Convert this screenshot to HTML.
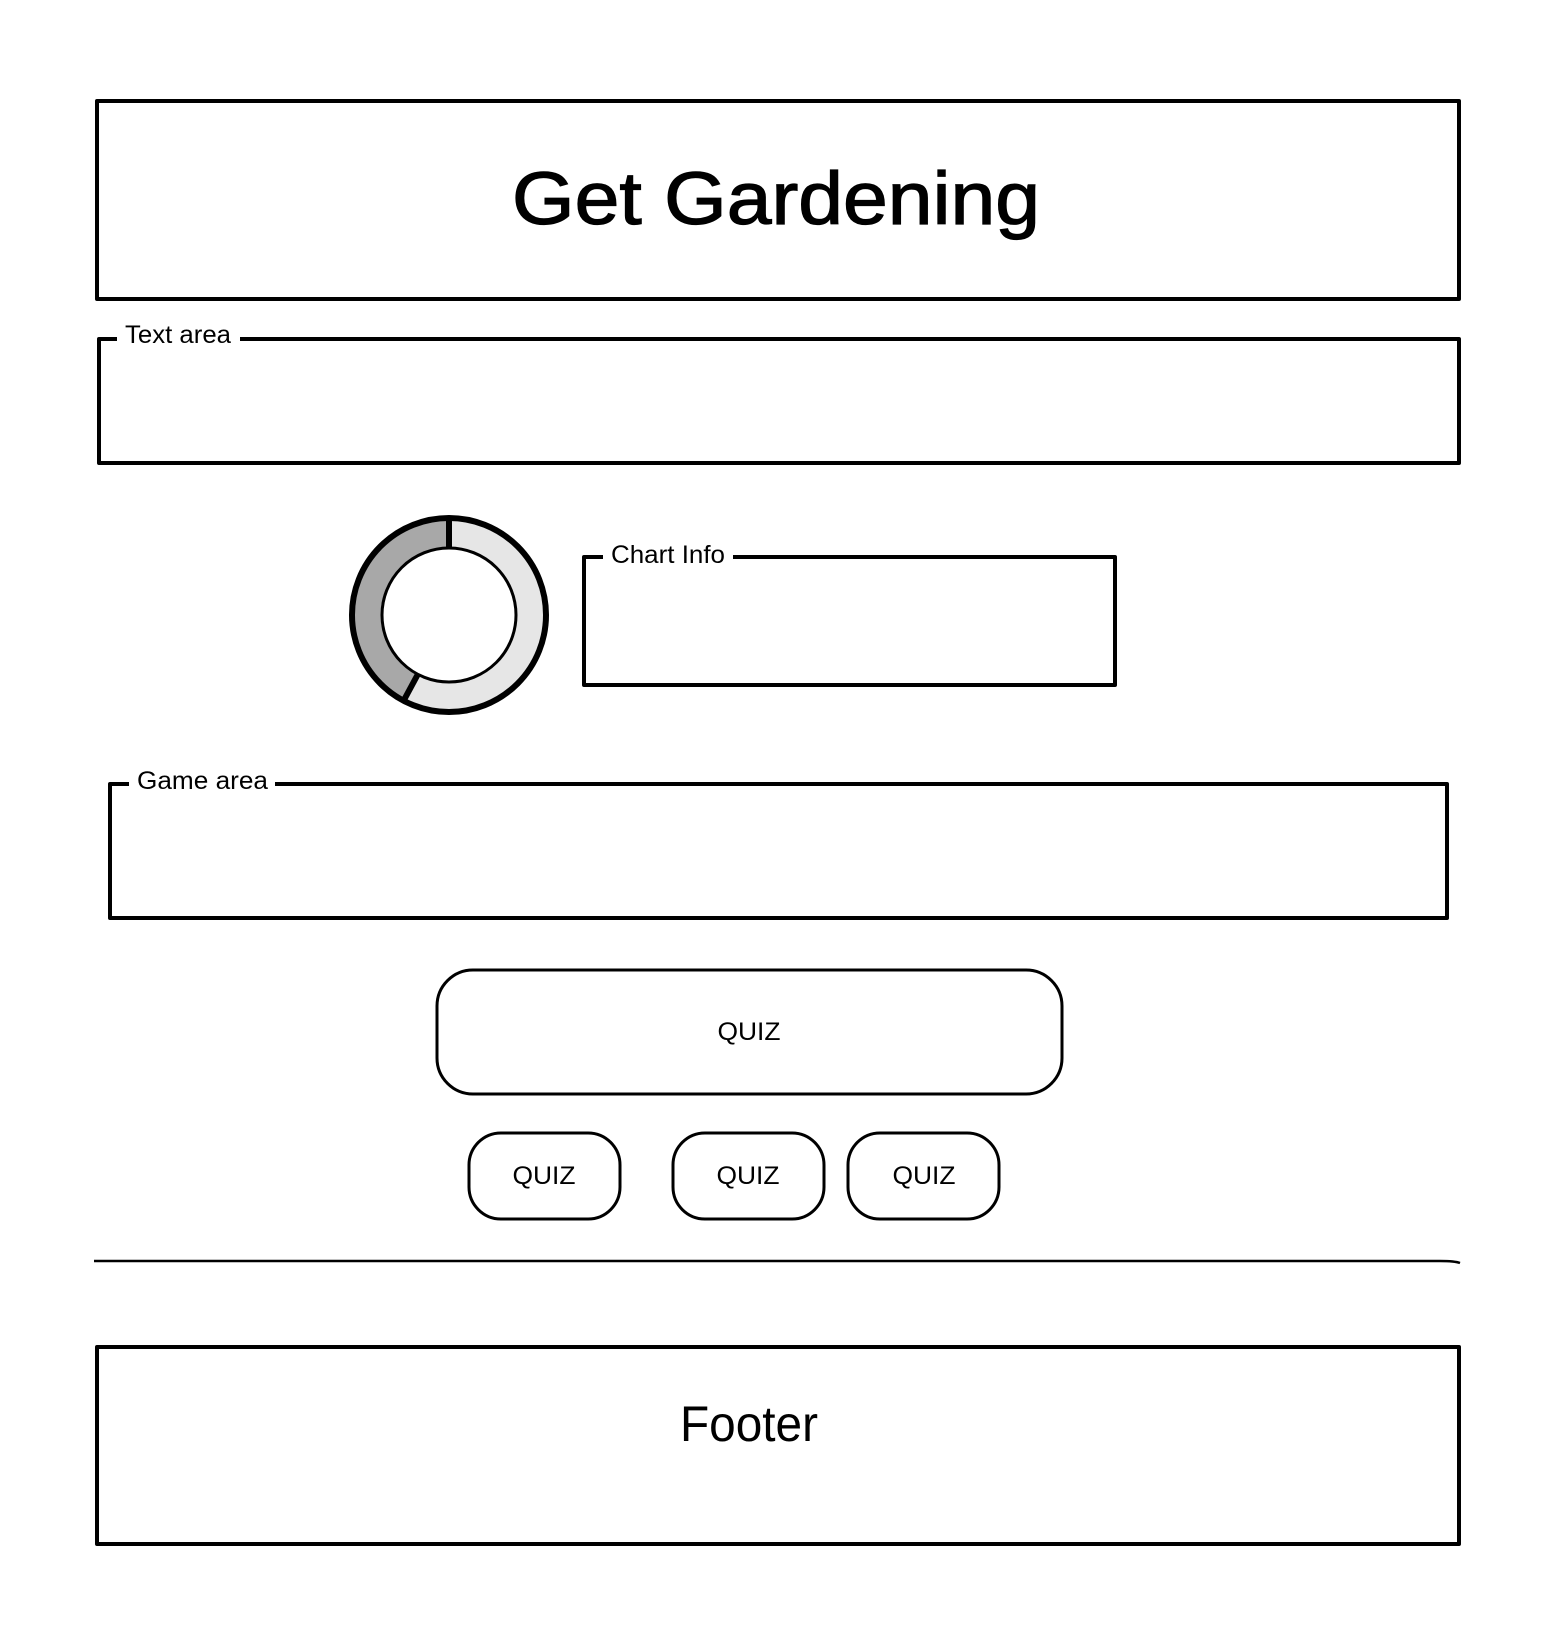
<!DOCTYPE html>
<html><head><meta charset="utf-8"><style>
html,body{margin:0;padding:0;background:#fff;}
svg{display:block;}
text{font-family:"Liberation Sans",sans-serif;fill:#000;}
</style></head><body>
<svg width="1550" height="1641" viewBox="0 0 1550 1641" xmlns="http://www.w3.org/2000/svg">
<g fill="none" stroke="#000" stroke-width="4" stroke-linejoin="round">
<rect x="97" y="101" width="1362" height="198"/>
<path d="M117 339 H99 V463 H1459 V339 H240"/>
<path d="M603 557 H584 V685 H1115 V557 H733"/>
<path d="M129 784 H110 V918 H1447 V784 H275"/>
<rect x="97" y="1347" width="1362" height="197"/>
</g>
<g fill="none" stroke="#000" stroke-width="3">
<rect x="437" y="970" width="625" height="124" rx="36"/>
<rect x="469" y="1133" width="151" height="86" rx="32"/>
<rect x="673" y="1133" width="151" height="86" rx="32"/>
<rect x="848" y="1133" width="151" height="86" rx="32"/>
</g>
<path d="M94 1261 L1440 1261 Q1455 1261 1460 1263" fill="none" stroke="#000" stroke-width="2.5"/>
<circle cx="449" cy="615" r="82" fill="none" stroke="#e6e6e6" stroke-width="30"/>
<path d="M449 533 A82 82 0 0 0 410.5 687.4" fill="none" stroke="#a8a8a8" stroke-width="30"/>
<circle cx="449" cy="615" r="97" fill="none" stroke="#000" stroke-width="6"/>
<circle cx="449" cy="615" r="67" fill="#fff" stroke="#000" stroke-width="3"/>
<line x1="449" y1="518" x2="449" y2="548" stroke="#000" stroke-width="6"/>
<line x1="418" y1="674" x2="404" y2="700" stroke="#000" stroke-width="6"/>
<text x="776" y="224" font-size="74" stroke="#000" stroke-width="1.2" text-anchor="middle" textLength="528" lengthAdjust="spacingAndGlyphs">Get Gardening</text>
<text x="125" y="343" font-size="25" textLength="106" lengthAdjust="spacingAndGlyphs">Text area</text>
<text x="611" y="563" font-size="25" textLength="114" lengthAdjust="spacingAndGlyphs">Chart Info</text>
<text x="137" y="789" font-size="25" textLength="131" lengthAdjust="spacingAndGlyphs">Game area</text>
<text x="749" y="1040" font-size="25" text-anchor="middle" textLength="63" lengthAdjust="spacingAndGlyphs">QUIZ</text>
<text x="544" y="1184" font-size="25" text-anchor="middle" textLength="63" lengthAdjust="spacingAndGlyphs">QUIZ</text>
<text x="748" y="1184" font-size="25" text-anchor="middle" textLength="63" lengthAdjust="spacingAndGlyphs">QUIZ</text>
<text x="924" y="1184" font-size="25" text-anchor="middle" textLength="63" lengthAdjust="spacingAndGlyphs">QUIZ</text>
<text x="749" y="1441" font-size="50" text-anchor="middle" textLength="138" lengthAdjust="spacingAndGlyphs">Footer</text>
</svg>
</body></html>
